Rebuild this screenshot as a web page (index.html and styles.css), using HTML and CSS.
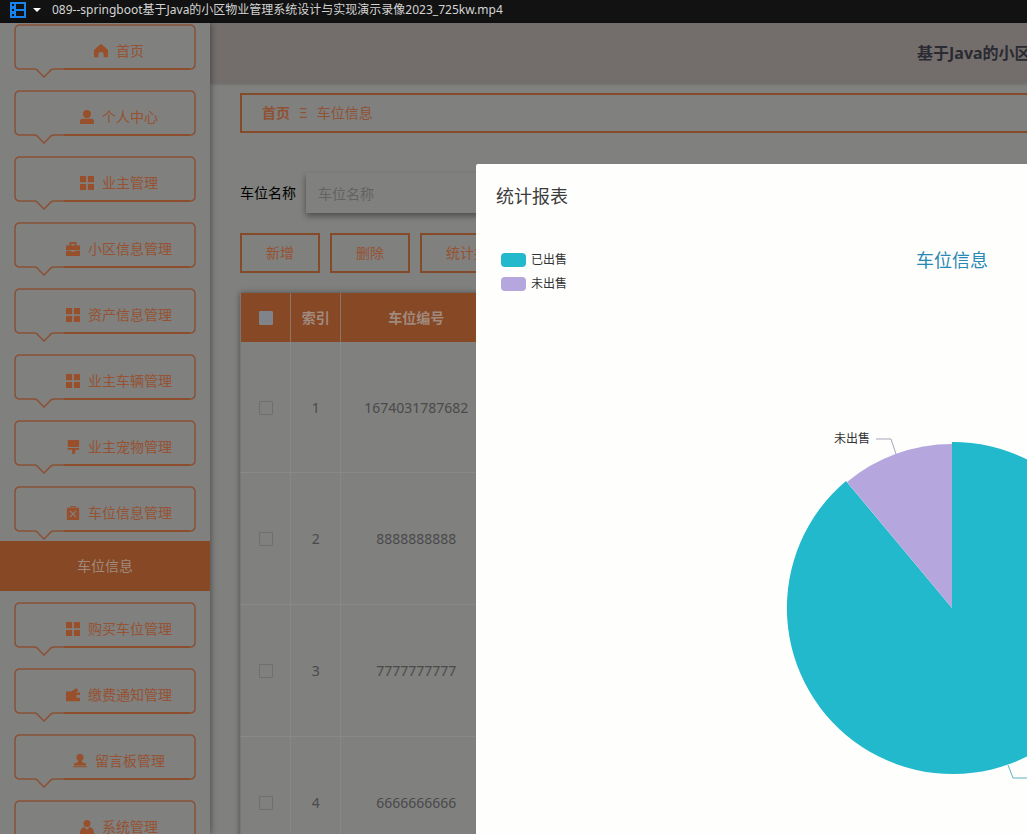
FILE: index.html
```
<!DOCTYPE html>
<html lang="zh-CN">
<head>
    <meta charset="UTF-8">
    <meta name="viewport" content="width=device-width, initial-scale=1.0">
    <title>车位信息 - 统计报表</title>
    <link rel="stylesheet" href="styles.css">
</head>
<body>
    <svg class="sprite" aria-hidden="true">
        <symbol id="i-home" viewBox="0 0 16 16"><path d="M8 0Q6 1 0 7v8h5v-4q0-2 3-2t3 2v4h5V7Q10 1 8 0z"/></symbol>
        <symbol id="i-user" viewBox="0 0 16 16"><circle cx="8" cy="4.500" r="4.500"/><path d="M0 16v-2c0-3 1-4 3-4h10c2 0 3 1 3 4v2z"/></symbol>
        <symbol id="i-grid" viewBox="0 0 16 16"><path d="M0 0h7v7H0zM9 0h7v7H9zM0 9h7v7H0zM9 9h7v7H9z"/></symbol>
        <symbol id="i-case" viewBox="0 0 16 16"><path d="M4 4V0h8v4h4v5H0V4zm2 0h4V2H6zM0 10h6v1h4v-1h6v6H0z"/></symbol>
        <symbol id="i-brush" viewBox="0 0 16 16"><path d="M2 0h13v8H2zM2 9h13v2h-4l-1 5H7V11H2z"/></symbol>
        <symbol id="i-clip" viewBox="0 0 16 16"><path fill-rule="evenodd" d="M1 2h4V0h6v2h4v14H1zM4 6l3 3-3 3 1 1 3-3 3 3 1-1-3-3 3-3-1-1-3 3-3-3zM6 1v1h4V1z"/></symbol>
        <symbol id="i-wallet" viewBox="0 0 16 16"><path d="M0 4h6l6-4 2 3-3 2h5v3h-4v3h4v4H0z"/></symbol>
        <symbol id="i-board" viewBox="0 0 16 16"><path d="M8 0a4 4 0 0 1 4 4c0 2-1 3-2 4v1l5 2v2H1v-2l5-2V8C5 7 4 6 4 4a4 4 0 0 1 4-4zM0 14h16v1H0z"/></symbol>
        <symbol id="i-admin" viewBox="0 0 16 16"><circle cx="8" cy="4" r="4"/><path d="M0 16c0-5 2-7 5-8l3 3 3-3c3 1 5 3 5 8z"/></symbol>
    </svg>

    <div class="player-bar">
        <svg class="film" viewBox="0 0 16 16"><path fill-rule="evenodd" d="M0 0h16v16H0zM2 2v2h2V2zm0 5v2h2V7zm0 5v2h2v-2zM6 2v5h8V2zm0 7v5h8V9z"/></svg>
        <svg class="caret" viewBox="0 0 8 4"><path d="M0 0h8L4 4z"/></svg>
        <span>089--springboot基于Java的小区物业管理系统设计与实现演示录像2023_725kw.mp4</span>
    </div>

    <div class="app">
        <nav class="sidebar">
            <ul class="menu">
                <li><a class="bubble" href="#"><svg><use href="#i-home"/></svg>首页</a></li>
                <li><a class="bubble" href="#"><svg><use href="#i-user"/></svg>个人中心</a></li>
                <li><a class="bubble" href="#"><svg><use href="#i-grid"/></svg>业主管理</a></li>
                <li><a class="bubble" href="#"><svg><use href="#i-case"/></svg>小区信息管理</a></li>
                <li><a class="bubble" href="#"><svg><use href="#i-grid"/></svg>资产信息管理</a></li>
                <li><a class="bubble" href="#"><svg><use href="#i-grid"/></svg>业主车辆管理</a></li>
                <li><a class="bubble" href="#"><svg><use href="#i-brush"/></svg>业主宠物管理</a></li>
                <li class="open">
                    <a class="bubble" href="#"><svg><use href="#i-clip"/></svg>车位信息管理</a>
                    <a class="sub-item" href="#">车位信息</a>
                </li>
                <li><a class="bubble" href="#"><svg><use href="#i-grid"/></svg>购买车位管理</a></li>
                <li><a class="bubble" href="#"><svg><use href="#i-wallet"/></svg>缴费通知管理</a></li>
                <li><a class="bubble" href="#"><svg><use href="#i-board"/></svg>留言板管理</a></li>
                <li><a class="bubble" href="#"><svg><use href="#i-admin"/></svg>系统管理</a></li>
            </ul>
        </nav>

        <div class="main">
            <header class="header">
                <h1>基于Java的小区物业管理系统设计与实现</h1>
            </header>

            <div class="content">
                <div class="breadcrumb">
                    <a href="#">首页</a>
                    <span class="separator">Ξ</span>
                    <span>车位信息</span>
                </div>

                <form class="search">
                    <label for="spaceName">车位名称</label>
                    <input type="text" id="spaceName" placeholder="车位名称">
                </form>

                <div class="actions">
                    <button type="button">新增</button>
                    <button type="button">删除</button>
                    <button type="button">统计报表</button>
                </div>

                <table class="list">
                    <thead>
                        <tr>
                            <th class="narrow"><input type="checkbox" aria-label="全选"></th>
                            <th class="narrow">索引</th>
                            <th class="wide">车位编号</th>
                        </tr>
                    </thead>
                    <tbody>
                        <tr><td><input type="checkbox" aria-label="选择 1"></td><td>1</td><td>1674031787682</td></tr>
                        <tr><td><input type="checkbox" aria-label="选择 2"></td><td>2</td><td>8888888888</td></tr>
                        <tr><td><input type="checkbox" aria-label="选择 3"></td><td>3</td><td>7777777777</td></tr>
                        <tr><td><input type="checkbox" aria-label="选择 4"></td><td>4</td><td>6666666666</td></tr>
                    </tbody>
                </table>
            </div>
        </div>
    </div>

    <div class="dialog" role="dialog" aria-labelledby="dialogTitle">
        <h2 id="dialogTitle">统计报表</h2>
        <div class="chart">
            <div class="chart-head">
                <ul class="legend">
                    <li><i class="sold"></i>已出售</li>
                    <li><i class="unsold"></i>未出售</li>
                </ul>
                <h3>车位信息</h3>
                <span></span>
            </div>
            <svg class="pie" viewBox="-250 -190 500 380">
                <path class="slice-sold" d="M0 0V-166A166 166 0 1 1 -106 -127z"/>
                <path class="slice-unsold" d="M0 0V-164A164 164 0 0 0 -105 -126z"/>
                <path class="line-unsold" d="M-76 -169H-61L-56 -154"/>
                <path class="line-sold" d="M56 157L61 170H76"/>
                <text x="-82" y="-165" text-anchor="end">未出售</text>
            </svg>
        </div>
    </div>
</body>
</html>
```
FILE: styles.css
```
* {
    margin: 0;
    padding: 0;
    box-sizing: border-box;
}

body {
    height: 100vh;
    overflow: hidden;
    display: flex;
    flex-direction: column;
    background: #80807e;
    color: #4a4a4c;
    font-family: 'Noto Sans', 'Noto Sans CJK SC', sans-serif;
    font-size: 14px;
    line-height: 20px;
}

ul {
    list-style: none;
}

a {
    color: inherit;
    text-decoration: none;
}

input,
button {
    font: inherit;
}

.sprite {
    display: none;
}

/* 播放器标题栏 */
.player-bar {
    flex: none;
    height: 23px;
    padding: 0 10px 3px;
    display: flex;
    align-items: center;
    background: #121212;
    color: #d4d4d4;
    font-size: 12px;
    white-space: nowrap;
}

.film {
    width: 16px;
    height: 16px;
    margin-right: 7px;
    fill: #1683f0;
}

.caret {
    width: 8px;
    height: 4px;
    margin-right: 11px;
    fill: #fff;
}

.app {
    flex: 1;
    min-height: 0;
    display: flex;
}

/* 侧边菜单 */
.sidebar {
    position: relative;
    z-index: 1;
    flex: none;
    width: 210px;
    padding-top: 1px;
    box-shadow: 1px 0 6px rgba(0, 0, 0, 0.4);
    background: #80807e;
}

.menu li {
    padding-bottom: 12px;
}

.menu .open {
    padding-bottom: 11px;
}

.bubble {
    height: 54px;
    margin: 0 14px;
    padding-left: 28px;
    display: flex;
    align-items: center;
    justify-content: center;
    gap: 8px;
    color: #965232;
    background: url("data:image/svg+xml,%3Csvg xmlns='http://www.w3.org/2000/svg' width='182' height='54' fill='none' stroke='%238b5136' stroke-width='1.500'%3E%3Cpath d='M6 1H176Q181 1 181 6V40Q181 45 176 45H40Q37 45 35 48L30 53L25 48Q23 45 21 45H6Q1 45 1 40V6Q1 1 6 1Z'/%3E%3Cpath stroke='%23914824' d='M50 45H176'/%3E%3C/svg%3E") no-repeat;
}

.bubble svg {
    width: 14px;
    height: 14px;
    fill: #984f2b;
}

.sub-item {
    height: 50px;
    margin-top: 1px;
    display: flex;
    align-items: center;
    justify-content: center;
    background: #864825;
    color: #a08a7e;
}

.main {
    flex: 1;
    min-width: 0;
}

.header {
    height: 60px;
    padding-left: 707px;
    display: flex;
    align-items: center;
    background: #736e6c;
    box-shadow: 0 1px 3px rgba(0, 0, 0, 0.2);
}

.header h1 {
    font-size: 16px;
    color: #2a2a32;
    white-space: nowrap;
}

.content {
    padding: 10px 0 0 30px;
}

.breadcrumb {
    height: 40px;
    padding-left: 20px;
    display: flex;
    align-items: center;
    gap: 9px;
    border: 2px solid #844b2b;
    border-right: 0;
    color: #8f5236;
}

.breadcrumb a {
    font-weight: bold;
}

.search {
    margin: 40px 0 20px;
    display: flex;
    align-items: center;
    gap: 10px;
}

.search label {
    color: #000;
}

.search input {
    width: 200px;
    height: 40px;
    padding: 0 12px;
    border: 0;
    outline: none;
    background: #80807e;
    box-shadow: 0 3px 6px rgba(0, 0, 0, 0.4);
}

.search input::placeholder {
    color: #636363;
}

.actions {
    margin-bottom: 20px;
    display: flex;
    gap: 10px;
}

.actions button {
    height: 40px;
    padding: 0 24px;
    border: 2px solid #844b2b;
    background: transparent;
    color: #965232;
    cursor: pointer;
}

/* 数据列表 */
.list {
    table-layout: fixed;
    width: 252px;
    border-collapse: collapse;
    border-left: 1px solid #777775;
    text-align: center;
    box-shadow: 0 0 6px rgba(0, 0, 0, 0.4);
}

.list th {
    height: 49px;
    background: #864825;
    color: #a08a7e;
    border-right: 1px solid #8d7465;
}

.list td {
    height: 132px;
    padding-top: 2px;
    border-right: 1px solid #888886;
    border-bottom: 1px solid #888886;
}

.list tbody tr:first-child td {
    height: 130px;
}

.narrow {
    width: 50px;
}

.wide {
    width: 150px;
}

.list input {
    appearance: none;
    display: block;
    width: 14px;
    height: 14px;
    margin: 0 auto;
    border: 1px solid #6f6f6f;
    border-radius: 1px;
}

.list th input {
    border-color: #80848a;
    background: #80848a;
}

/* 统计报表弹窗 */
.dialog {
    position: absolute;
    z-index: 2;
    top: 164px;
    left: 476px;
    right: -401px;
    bottom: 0;
    padding: 20px;
    overflow: hidden;
    border-radius: 2px 0 0 0;
    background: #fefefd;
}

.dialog h2 {
    font-size: 18px;
    font-weight: normal;
    line-height: 24px;
    color: #3c3c3c;
}

.chart {
    padding: 38px 5px 0;
    font-size: 12px;
    color: #333;
}

.chart-head {
    display: grid;
    grid-template-columns: 1fr auto 1fr;
}

.chart h3 {
    font-size: 18px;
    font-weight: normal;
    line-height: 28px;
    color: #2787b5;
}

.legend {
    padding-top: 2px;
}

.legend li {
    height: 24px;
    display: flex;
    align-items: center;
    gap: 5px;
}

.legend i {
    width: 25px;
    height: 14px;
    border-radius: 4px;
}

.sold {
    background: #22b9cc;
}

.unsold {
    background: #b6a6de;
}

.pie {
    display: block;
    width: 500px;
    height: 380px;
    margin: 122px auto 0;
    font-size: 12px;
    fill: #333;
}

.slice-sold {
    fill: #22b9cc;
}

.slice-unsold {
    fill: #b6a6de;
}

.line-sold,
.line-unsold {
    fill: none;
    stroke: #5db4bf;
}

.line-unsold {
    stroke: #a9a3b8;
}
```
